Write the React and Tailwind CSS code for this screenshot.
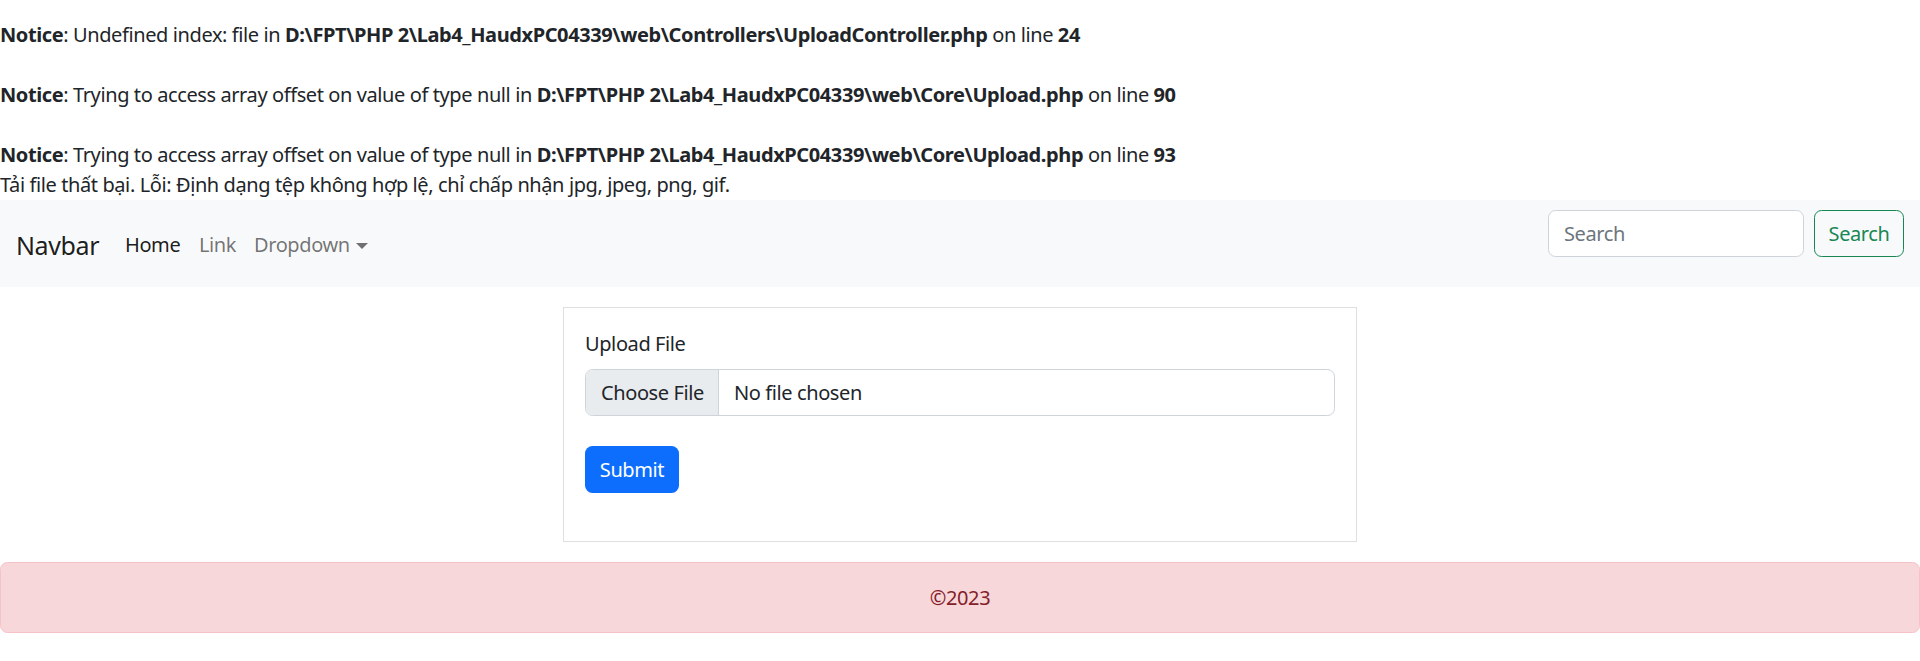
export default function App() {
  return (
    <div
      className="min-h-screen bg-white text-[20px] leading-[30px] tracking-[-0.4px] text-[#212529]"
      style={{ fontFamily: '"Noto Sans", "Open Sans", sans-serif' }}
    >
      {/* PHP notices */}
      <div className="pt-[20px]">
        <div className="mb-[30px]">
          <b>Notice</b>: Undefined index: file in <b>D:\FPT\PHP 2\Lab4_HaudxPC04339\web\Controllers\UploadController.php</b> on line <b>24</b>
        </div>
        <div className="mb-[30px]">
          <b>Notice</b>: Trying to access array offset on value of type null in <b>D:\FPT\PHP 2\Lab4_HaudxPC04339\web\Core\Upload.php</b> on line <b>90</b>
        </div>
        <div>
          <b>Notice</b>: Trying to access array offset on value of type null in <b>D:\FPT\PHP 2\Lab4_HaudxPC04339\web\Core\Upload.php</b> on line <b>93</b>
        </div>
        <div>Tải file thất bại. Lỗi: Định dạng tệp không hợp lệ, chỉ chấp nhận jpg, jpeg, png, gif.</div>
      </div>

      {/* Navbar */}
      <nav className="flex h-[87px] items-start justify-between bg-[#f8f9fa] px-[16px]">
        <div className="flex h-[60px] items-center pt-[30px]">
          <span className="w-[109px] text-[25px] leading-[36px] text-black/90">Navbar</span>
          <span className="w-[74px] text-black/90">Home</span>
          <span className="w-[55px] text-black/55">Link</span>
          <span className="flex items-center text-black/55">
            Dropdown
            <span className="ml-[6px] mt-[2px] h-0 w-0 border-x-[6px] border-t-[6px] border-x-transparent border-t-black/55" />
          </span>
        </div>
        <div className="flex items-center gap-[10px] pt-[10px]">
          <input
            className="h-[47px] w-[256px] rounded-[7.5px] border border-[#ced4da] bg-white px-[15px] text-[20px] text-[#212529] placeholder:text-[#6c757d] focus:outline-none"
            placeholder="Search"
            readOnly
          />
          <button className="h-[47px] w-[90px] rounded-[7.5px] border border-[#198754] text-[#198754]">
            Search
          </button>
        </div>
      </nav>

      {/* Upload form */}
      <div className="mt-[20px] flex justify-center">
        <div className="h-[235px] w-[794px] border border-[#dfdfdf] px-[21px] pt-[21px]">
          <div className="mb-[10px]">Upload File</div>
          <div className="flex h-[47px] items-center overflow-hidden rounded-[7.5px] border border-[#ced4da]">
            <span className="flex h-full w-[133px] items-center border-r border-[#ced4da] bg-[#e9ecef] pl-[15px]">
              Choose File
            </span>
            <span className="pl-[15px]">No file chosen</span>
          </div>
          <button className="mt-[30px] h-[47px] w-[94px] rounded-[7.5px] bg-[#0d6efd] text-white">
            Submit
          </button>
        </div>
      </div>

      {/* Footer */}
      <div className="mt-[20px] flex h-[71px] items-center justify-center rounded-[7.5px] border border-[#f5c2c7] bg-[#f8d7da] text-[#842029]">
        ©2023
      </div>
    </div>
  )
}
